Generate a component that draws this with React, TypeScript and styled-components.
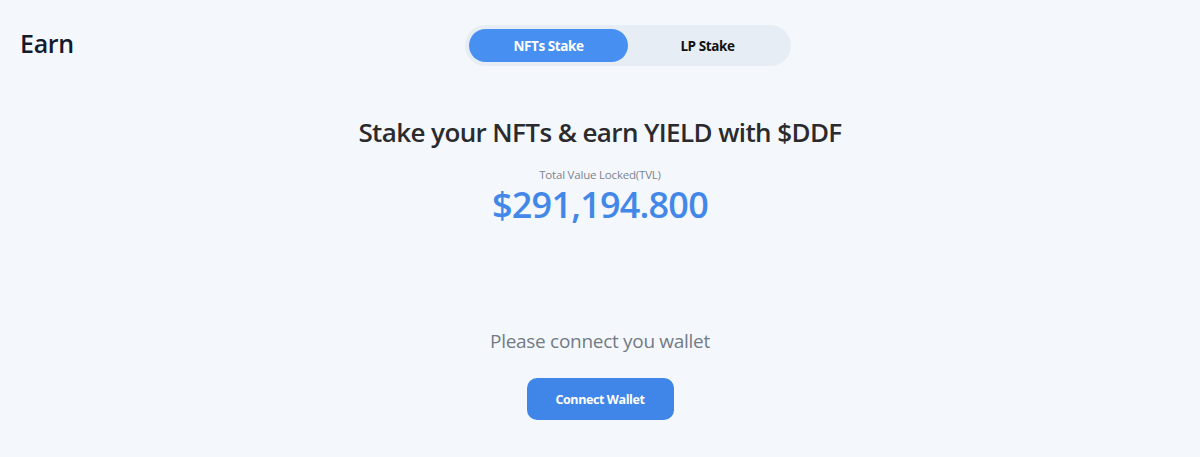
import React, { useState } from "react";
import styled, { createGlobalStyle } from "styled-components";

const GlobalStyle = createGlobalStyle`
	html, body {
		margin: 0;
		padding: 0;
		background: #f4f8fc;
		font-family: "Open Sans", "Noto Sans", sans-serif;
	}
`;

export default function App() {
	const [tab, setTab] = useState("nft");

	return (
		<>
			<GlobalStyle />
			<Page>
				<Header>
					<Title>Earn</Title>
					<Toggle>
						<ToggleButton active={tab === "nft"} onClick={() => setTab("nft")}>
							NFTs Stake
						</ToggleButton>
						<ToggleButton active={tab === "lp"} onClick={() => setTab("lp")}>
							LP Stake
						</ToggleButton>
					</Toggle>
				</Header>
				<Hero>
					<Headline>Stake your NFTs &amp; earn YIELD with $DDF</Headline>
					<TvlLabel>Total Value Locked(TVL)</TvlLabel>
					<TvlValue>$291,194.800</TvlValue>
				</Hero>
				<Connect>
					<ConnectText>Please connect you wallet</ConnectText>
					<ConnectButton>Connect Wallet</ConnectButton>
				</Connect>
			</Page>
		</>
	);
}

const Page = styled.div`
	width: 1200px;
	height: 457px;
	display: flex;
	flex-direction: column;
	align-items: center;
	background: #f4f8fc;
`;

const Header = styled.div`
	width: 100%;
	position: relative;
	display: flex;
	justify-content: center;
	padding-top: 25px;
`;

const Title = styled.h1`
	position: absolute;
	left: 20px;
	top: 26px;
	margin: 0;
	font-size: 25px;
	font-weight: 600;
	color: #141a2e;
	letter-spacing: -0.3px;
`;

const Toggle = styled.div`
	display: flex;
	width: 326px;
	height: 41px;
	box-sizing: border-box;
	padding: 4px;
	border-radius: 21px;
	background: #e7edf5;
	transform: translateX(28px);
`;

const ToggleButton = styled.button<{ active: boolean }>`
	flex: 1;
	border: none;
	border-radius: 17px;
	font-family: inherit;
	font-size: 13.5px;
	font-weight: 700;
	letter-spacing: -0.4px;
	cursor: pointer;
	background: ${(p) => (p.active ? "#4790f2" : "transparent")};
	color: ${(p) => (p.active ? "#ffffff" : "#111111")};
`;

const Hero = styled.div`
	display: flex;
	flex-direction: column;
	align-items: center;
	margin-top: 48px;
`;

const Headline = styled.h2`
	margin: 0;
	font-size: 26px;
	font-weight: 600;
	color: #2b2b2e;
	letter-spacing: -0.6px;
`;

const TvlLabel = styled.div`
	margin-top: 17px;
	font-size: 11.5px;
	line-height: 16px;
	color: #7d8490;
	letter-spacing: -0.2px;
`;

const TvlValue = styled.div`
	margin-top: 2px;
	font-size: 36px;
	font-weight: 600;
	color: #4388e8;
	letter-spacing: -0.8px;
	line-height: 40px;
`;

const Connect = styled.div`
	display: flex;
	flex-direction: column;
	align-items: center;
	margin-top: 103px;
`;

const ConnectText = styled.div`
	font-size: 19px;
	color: #737b86;
	letter-spacing: -0.3px;
`;

const ConnectButton = styled.button`
	margin-top: 24px;
	width: 147px;
	height: 42px;
	border: none;
	border-radius: 10px;
	background: #3f86e8;
	color: #ffffff;
	font-family: inherit;
	font-size: 12.5px;
	font-weight: 700;
	letter-spacing: -0.4px;
	cursor: pointer;
`;
